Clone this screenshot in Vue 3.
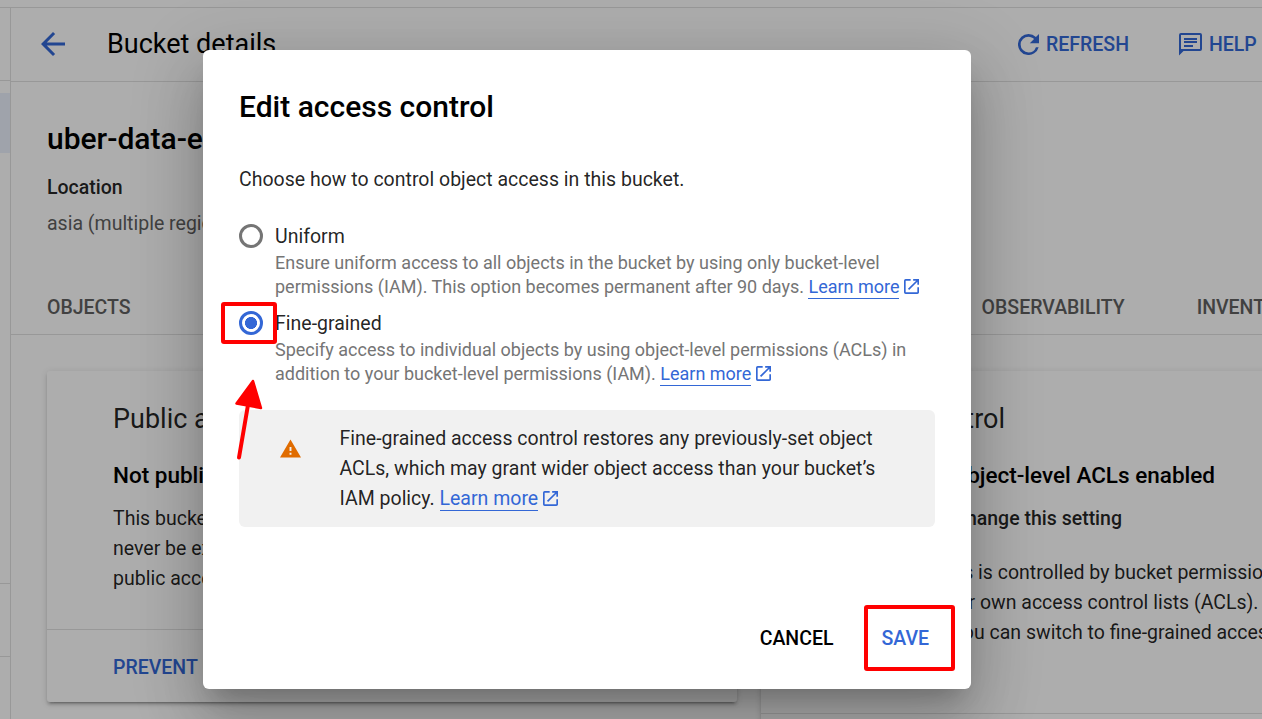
<script setup>
import { h } from 'vue'

const options = [
  {
    id: 'uniform',
    label: 'Uniform',
    lines: [
      'Ensure uniform access to all objects in the bucket by using only bucket-level',
      'permissions (IAM). This option becomes permanent after 90 days.'
    ],
    checked: false
  },
  {
    id: 'fine',
    label: 'Fine-grained',
    lines: [
      'Specify access to individual objects by using object-level permissions (ACLs) in',
      'addition to your bucket-level permissions (IAM).'
    ],
    checked: true
  }
]

const LaunchIcon = () =>
  h('svg', { viewBox: '3 3 18 18', width: 15, height: 15, fill: 'currentColor' }, [
    h('path', {
      d: 'M19 19H5V5h6V3H5a2 2 0 0 0-2 2v14a2 2 0 0 0 2 2h14c1.100 0 2-.9 2-2v-6h-2v6zM14 3v2h3.590l-9.830 9.830 1.410 1.410L19 6.410V10h2V3h-7z'
    })
  ])
</script>

<template>
  <div class="screen">
    <div class="topbar"></div>
    <div class="body">
      <nav class="rail">
        <div class="rail-head"></div>
        <div class="rail-active"></div>
        <div class="rail-space"></div>
        <div class="rail-item"></div>
      </nav>
      <main class="main">
        <header class="header">
          <svg class="back" viewBox="4 4 16 16" width="24" height="24">
            <path d="M20 11H7.830l5.590-5.590L12 4l-8 8 8 8 1.410-1.410L7.830 13H20v-2z" />
          </svg>
          <h1>Bucket details</h1>
          <div class="action refresh">
            <svg viewBox="4 4 16 16" width="21" height="21">
              <path d="M17.650 6.350A7.958 7.958 0 0 0 12 4a8 8 0 1 0 7.730 10h-2.080A5.990 5.990 0 0 1 12 18a6 6 0 1 1 0-12c1.660 0 3.140.69 4.220 1.780L13 11h7V4l-2.350 2.350z" />
            </svg>
            <span>REFRESH</span>
          </div>
          <div class="action help">
            <svg viewBox="0 0 23 23" width="23" height="23">
              <path fill-rule="evenodd" d="M2 0h19a2 2 0 0 1 2 2v14a2 2 0 0 1-2 2H4.500L0 22.500V2a2 2 0 0 1 2-2zM2 2v14h19V2zM5 5h13v2H5zM5 8h13v2H5zM5 12h9v2H5z" />
            </svg>
            <span>HELP</span>
          </div>
        </header>

        <section class="summary">
          <h2>uber-data-engineering</h2>
          <strong>Location</strong>
          <p>asia (multiple regions in Asia)</p>
        </section>

        <div class="tabs">
          <span>OBJECTS</span>
          <span class="tab-observe">OBSERVABILITY</span>
          <span class="tab-inventory">INVENTORY</span>
        </div>

        <section class="cards">
          <article class="card public">
            <div class="card-body">
              <h3>Public access</h3>
              <h4>Not public</h4>
              <p>This bucket is not public and will<br />never be exposed while the<br />public access prevention is on.</p>
            </div>
            <footer>PREVENT PUBLIC ACCESS</footer>
          </article>
          <article class="card access">
            <div class="card-body">
              <h3><span>Access control</span></h3>
              <h4><span>Uniform: No object-level ACLs enabled</span></h4>
              <h5><span>90 days left to change this setting</span></h5>
              <div class="line l1"><span>Objects access is controlled by bucket permissions</span></div>
              <div class="line l2"><span>without their own access control lists (ACLs).</span></div>
              <div class="line l3"><span>If needed, you can switch to fine-grained access</span></div>
            </div>
            <footer></footer>
          </article>
        </section>
      </main>
    </div>

    <div class="backdrop"></div>

    <div class="dialog" role="dialog">
      <h2>Edit access control</h2>
      <p class="intro">Choose how to control object access in this bucket.</p>
      <div v-for="o in options" :key="o.id" class="option">
        <span class="radio" :class="{ on: o.checked }"></span>
        <div>
          <div class="label">{{ o.label }}</div>
          <div class="desc">
            {{ o.lines[0] }}<br />{{ o.lines[1] }}
            <a>Learn more</a><LaunchIcon class="launch" />
          </div>
        </div>
      </div>
      <div class="notice">
        <svg class="warn" viewBox="1 2 22 19" width="21" height="19">
          <path d="M1 21h22L12 2 1 21zm12-3h-2v-2h2v2zm0-4h-2v-4h2v4z" />
        </svg>
        <p>
          Fine-grained access control restores any previously-set object<br />
          ACLs, which may grant wider object access than your bucket’s<br />
          IAM policy. <a>Learn more</a><LaunchIcon class="launch" />
        </p>
      </div>
      <div class="actions">
        <button class="cancel">CANCEL</button>
        <button class="save">SAVE</button>
      </div>
    </div>

    <div class="mark mark-radio"></div>
    <div class="mark mark-save"></div>
    <svg class="arrow" viewBox="0 0 40 90" width="40" height="90">
      <path class="shaft" d="M9 82.500L18.500 27" />
      <path class="head" d="M23 6L6.500 28.500L31 33Z" />
    </svg>
  </div>
</template>

<style>
body { background: #adadad; overflow: hidden; }
</style>

<style scoped>
.screen {
  position: relative; width: 1262px; height: 719px; overflow: hidden;
  background: #fff; font-family: Roboto, "Liberation Sans", sans-serif;
  font-size: 19.5px; line-height: 30px; color: rgba(0, 0, 0, .87);
  display: flex; flex-direction: column;
}
h1, h2, h3, h4, h5, p { margin: 0; font-weight: 400; }
.topbar { height: 7px; flex: none; border-bottom: 1px solid #e0e0e0; }
.body { display: flex; flex: 1; min-height: 0; }
.rail { width: 10px; flex: none; border-right: 1px solid #e0e0e0; }
.rail-head { height: 72px; border-bottom: 1px solid #e0e0e0; }
.rail-active { height: 60px; margin-top: 12px; background: #ebf1fc; }
.rail-space { height: 430px; border-bottom: 1px solid #e0e0e0; }
.rail-item { height: 72px; border-bottom: 1px solid #e0e0e0; }
.main { flex: 1; min-width: 0; overflow: hidden; }
.header {
  height: 73px; border-bottom: 1px solid #e0e0e0; display: flex; align-items: center;
  padding-left: 30px;
}
.back, .action svg { fill: #3367d6; flex: none; }
.back { margin-bottom: 2px; }
h1 { font-size: 27px; margin: 0 0 2px 42px; width: 911px; color: #000; white-space: nowrap; }
.action { display: flex; align-items: center; gap: 7px; color: #3367d6; font-weight: 500; flex: none; }
.help { margin-left: 50px; }
.summary { height: 198px; padding: 42px 0 0 36px; box-sizing: border-box; white-space: nowrap; }
.summary h2 { font-size: 30px; font-weight: 500; color: #000; }
.summary strong { display: block; font-weight: 500; margin-top: 19px; }
.summary p { margin-top: 6px; color: #616161; }
.tabs {
  border-bottom: 1px solid #e0e0e0; display: flex; align-items: center;
  padding: 2px 0 0 36px; box-sizing: border-box; height: 55px; color: #616161; font-weight: 500;
}
.tab-observe { margin-left: 851px; }
.tab-inventory { margin-left: 72px; }
.cards { display: flex; gap: 24px; padding: 36px 0 0 36px; }
.card {
  width: 690px; height: 331px; flex: none; border-radius: 3px; background: #fff;
  display: flex; flex-direction: column; white-space: nowrap;
  box-shadow: 0 4.500px 1.500px -3px rgba(0, 0, 0, .2), 0 3px 3px rgba(0, 0, 0, .14), 0 1.500px 7.500px rgba(0, 0, 0, .12);
}
.card-body { flex: 1; padding: 33px 0 0 66px; }
.card h3 { font-size: 27px; }
.card h4 { font-size: 22.500px; font-weight: 500; margin-top: 26px; color: #000; }
.card p { margin-top: 14px; }
.card footer {
  height: 72px; border-top: 1px solid #e0e0e0; padding-left: 66px;
  color: #3367d6; font-weight: 500; line-height: 75px;
}
.access { height: 415px; }
.access h3, .access h4, .access h5, .line { display: flex; justify-content: flex-end; }
.access h3 { width: 178px; }
.access h4 { width: 388px; }
.access h5 { width: 295px; margin-top: 14px; font-size: 19.5px; font-weight: 500; }
.l1 { width: 457px; margin-top: 24px; }
.l2 { width: 431.500px; }
.l3 { width: 451px; }
.backdrop { position: absolute; inset: 0; background: rgba(0, 0, 0, .32); }
.dialog {
  position: absolute; left: 203px; top: 50px; width: 768px; height: 639px;
  box-sizing: border-box; padding: 36px; border-radius: 6px; background: #fff;
  box-shadow: 0 16.500px 22.500px -10.500px rgba(0, 0, 0, .2), 0 36px 57px 4.500px rgba(0, 0, 0, .14), 0 13.500px 69px 12px rgba(0, 0, 0, .12);
}
.dialog h2 { font-size: 30px; line-height: 42px; font-weight: 500; color: #000; }
.intro { margin: 37px 0 27px; }
.option { display: flex; gap: 12px; height: 87px; white-space: nowrap; }
.radio {
  width: 24px; height: 24px; margin-top: 2px; box-sizing: border-box; flex: none;
  border: 3px solid #757575; border-radius: 50%;
}
.radio.on { border-color: #3367d6; background: radial-gradient(circle, #3367d6 5.700px, transparent 6.300px); }
.desc { font-size: 18px; line-height: 24px; margin-top: -1px; color: #757575; letter-spacing: -.006px; }
a { color: #3367d6; border-bottom: 1px solid #3367d6; padding-bottom: 1px; }
.notice a { padding-bottom: 0; }
.launch { color: #3367d6; margin-left: 5px; vertical-align: -1px; }
.notice {
  height: 117px; box-sizing: border-box; margin-top: 14px; border-radius: 6px; background: #f1f1f1;
  padding: 14px 0 0 41px; display: flex; gap: 38.500px; white-space: nowrap;
}
.warn { fill: #e06c00; margin-top: 15px; flex: none; }
.actions { display: flex; justify-content: flex-end; margin-top: 85px; padding-right: 6px; }
button {
  font: 500 19.5px/54px Roboto, sans-serif; border: 0; background: none; padding: 0; height: 54px; color: #000;
}
.save { color: #3367d6; margin-left: 48px; }
.mark { position: absolute; box-sizing: border-box; border: 4px solid #f00; border-radius: 3px; }
.mark-radio { left: 221px; top: 302px; width: 56px; height: 42px; }
.mark-save { left: 864px; top: 605px; width: 91px; height: 66px; }
.arrow { position: absolute; left: 230px; top: 375px; }
.shaft { stroke: #f00; stroke-width: 4; stroke-linecap: round; }
.head { fill: #f00; stroke: #f00; stroke-width: 2.500; stroke-linejoin: round; }
</style>
